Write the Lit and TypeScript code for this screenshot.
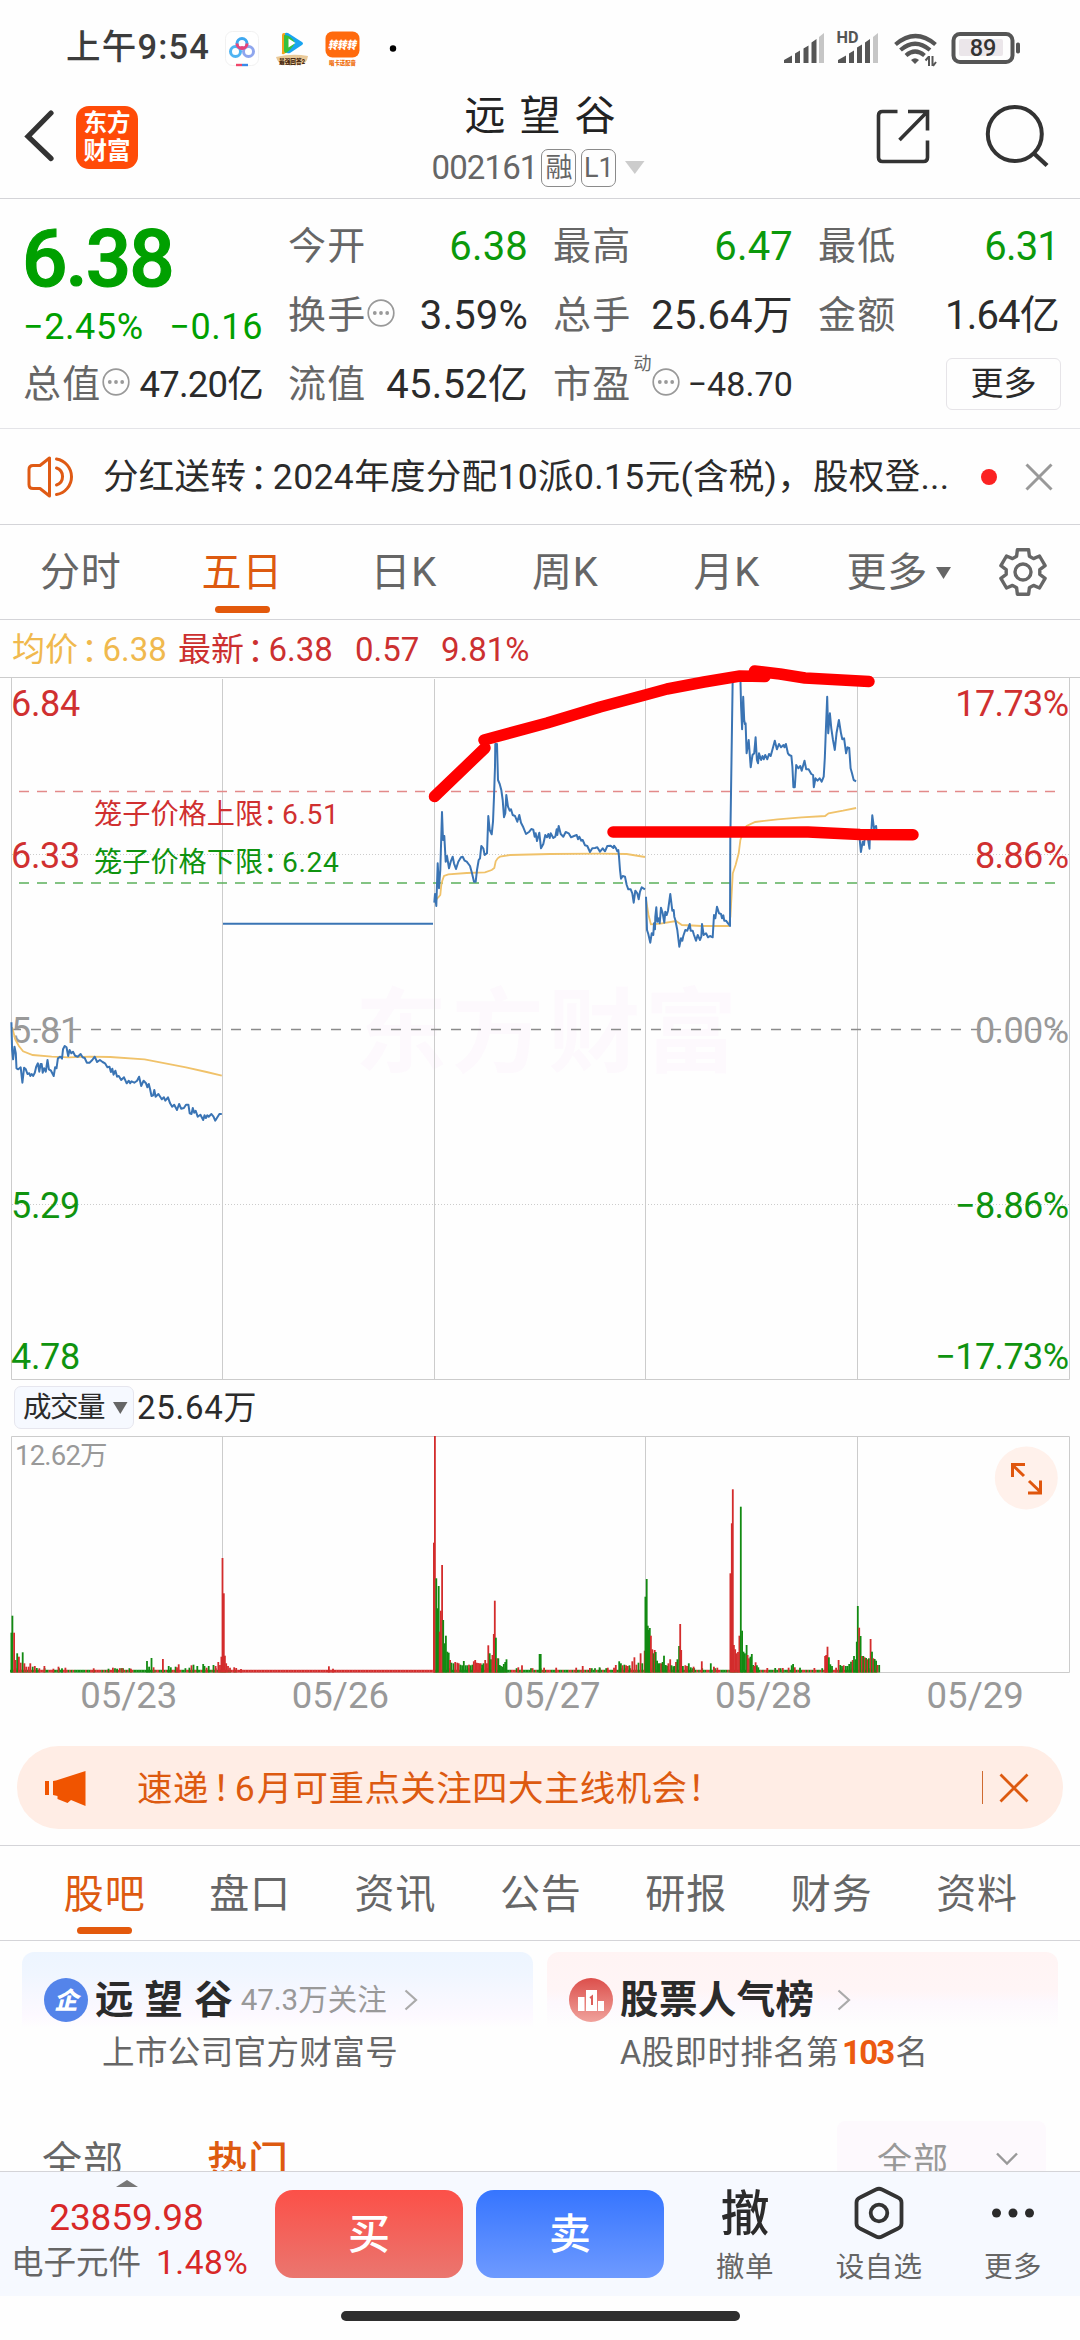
import { LitElement, html, svg, css } from "lit";
import { customElement } from "lit/decorators.js";
import { classMap } from "lit/directives/class-map.js";

type Pt = [number, number];

/* Series are stored in plotting units; a Frame maps them to page pixels. */
interface Frame { x: number; y: number; sx: number; sy: number }
const F_LEFT: Frame = { x: 0, y: 940, sx: 1 / 2.904, sy: 1 / 3 };
const F_MID: Frame = { x: 400, y: 640, sx: 1 / 3, sy: 1 / 3 };
const F_RIGHT: Frame = { x: 540, y: 520, sx: 1 / 2.904, sy: 1 / 3 };

const parse = (s: string): Pt[] =>
  s.trim().split(/\s+/).map((p) => p.split(",").map(Number) as Pt);
const place = (s: string, f: Frame): string =>
  parse(s).map(([x, y]) => `${(f.x + x * f.sx).toFixed(1)},${(f.y + y * f.sy).toFixed(1)}`).join(" ");

const PRICE: string[] = [
  place(`33,247 35,330 38,358 42,320 46,340 48,385 53,388 60,382 65,428 70,383 75,388 80,402 85,400 88,408 92,402 96,408
  101,398 105,380 110,370 114,395 118,372 121,372 124,398 128,385 133,395 138,360 142,388 148,392 156,408 160,382 164,385
  168,355 175,350 180,356 183,328 188,318 193,322 198,348 202,330 207,340 212,335 218,347 226,350 234,342 240,352 246,354
  252,368 260,368 268,360 275,350 282,366 290,360 298,366 305,370 312,382 318,380 322,396 326,386 330,404 335,392 340,410
  345,408 352,420 360,412 368,430 374,422 378,430 382,424 390,428 398,422 404,410 410,438 417,422 424,430 428,442 432,432
  436,448 440,468 445,466 448,450 452,470 460,462 470,478 476,472 480,482 488,472 494,490 500,500 506,494 514,510 520,492
  526,506 534,504 540,494 547,494 551,520 556,522 560,504 564,518 568,512 574,530 582,524 590,540 594,526 598,534 602,526
  606,530 614,522 620,530 625,542 630,534 637,522 644,522`, F_LEFT),
  "223,923.7 433,923.7",
  place(`103,788 105,762 109,798 113,670 117,745 121,690 126,516 129,600 133,588 137,665 141,648 147,685 152,665 158,650
  162,670 168,687 175,665 183,652 188,650 194,662 200,665 210,678 216,700 222,725 227,725 231,690 236,660 240,655 244,618
  250,625 254,645 261,640 265,528 269,570 275,583 279,545 282,470 285,380 286,312 291,312 294,420 299,432 304,450 308,480
  312,532 316,520 319,465 324,500 329,512 333,508 338,525 345,528 352,545 358,525 363,548 370,562 378,582 388,575 394,567
  400,569 404,590 407,580 411,603 418,578 423,625 430,612 436,585 441,592 445,582 449,594 452,580 460,594 466,590 470,568
  472,585 476,558 482,582 490,590 497,576 506,580 513,592 522,588 530,585 534,598 538,590 544,602 548,600 555,616 562,618
  570,636 577,625 585,624 592,622 600,635 608,625 615,634 622,618 632,617 640,624 642,617 648,625 652,634 655,630 657,650
  660,690 663,716 668,708 675,710 680,735 685,748 692,748 697,760 701,788 706,752 712,760 716,778 720,755 725,742 735,748`, F_MID),
  place(`738,770 741,870 745,882 751,908 755,880 760,885 762,850 765,868 766,830 769,802 772,845 776,835 779,850 783,803
  788,820 793,848 796,815 800,825 804,812 811,762 817,812 821,810 823,830 826,840 832,870 838,920 843,895 847,902 850,888
  856,870 862,872 869,852 872,872 878,872 882,885 888,902 893,885 900,900 904,890 906,852 911,885 918,880 924,892 930,888
  938,892 942,825 946,835 951,800 957,820 963,822 966,835 970,826 973,842 978,842 984,850 990,858 991,600 994,400 998,115`, F_MID),
  place(`560,474 582,474 584,560 587,628 590,530 593,600 595,612 597,610 600,700 606,660 612,742 617,705 622,700 626,652
  630,720 633,730 636,700 642,720 646,708 650,718 654,705 660,718 665,702 670,708 676,685 682,662 688,688 694,672 700,682
  707,675 710,682 714,672 720,700 724,705 730,708 733,740 736,802 740,802 744,735 750,745 756,738 760,752 768,722 773,748
  780,748 788,762 793,765 795,802 800,775 806,782 812,775 818,785 824,770 827,715 830,635 834,530 837,640 842,580 846,625
  851,660 856,690 861,640 868,600 874,640 878,658 883,655 889,700 893,682 898,684 902,745 906,760 911,780 918,784`, F_RIGHT),
  place(`921,940 928,955 932,996 937,965 941,975 945,935 950,940 957,986 958,945 962,935 965,886 970,925 976,918 978,940`, F_RIGHT),
];

const AVERAGE: string[] = [
  place(`35,262 45,300 55,318 67,334 95,345 150,350 200,352 260,350 320,351 420,358 480,370 540,382 600,396 644,407`, F_LEFT),
  place(`110,778 115,772 121,765 124,735 127,722 132,708 145,703 200,699 255,697 275,690 283,684 287,664 293,655 300,650 330,645
  450,642 600,641 680,642 735,651`, F_MID),
  place(`308,1140 315,1185 322,1213 350,1211 395,1203 412,1215 470,1218 548,1218 553,1190 560,1060 568,1035 577,1000 582,960
  590,935 600,918 625,906 690,898 760,892 828,888 838,880 880,872 918,864`, F_RIGHT),
];

const STROKES: string[] = [
  "434.5,796.5 485,748",
  "484,740 547,723 600,707 645,695 667,689 704,682 740,676 765,676.5",
  "754.5,671 780,674 805,678 869,681.5",
  "613,832 808,832 860,834.5 913,834.7",
];

/* Volume bars: x, top and direction (r = up, g = down). */
const VOL_LEFT = `33,788,g 36,737,g 41,788,r 45,870,r 50,850,g 55,860,r 60,878,r 66,847,g 71,880,r 76,890,r 83,890,r 88,880,r
95,890,g 101,888,r 107,894,g 114,895,r 129,888,r 155,896,r 170,890,r 180,895,g 190,893,r 272,895,r 315,896,g 328,893,r 340,896,g
355,895,r 380,896,r 427,873,g 433,890,g 440,864,g 446,892,r 473,867,r 490,888,g 496,892,g 510,890,g 514,892,r 519,883,r 550,893,g
556,886,r 562,884,g 573,888,g 590,882,g 594,888,g 600,893,r 606,888,g 620,885,g 626,888,r 634,876,r 639,885,r 643,860,r 646,564,r
650,670,r 653,857,r 657,880,r 662,888,r 668,893,r 680,892,r 686,894,r 700,897,r 955,889,r 967,896,r 1260,518,r 1263,198,r
1267,625,g 1270,715,g 1274,648,g 1277,785,r 1280,722,r 1284,585,r 1287,750,g 1291,820,g 1295,797,g 1299,845,g 1303,848,g
1307,870,r 1311,878,g 1317,880,g 1322,876,r 1328,878,r 1332,880,r 1337,884,g 1342,886,g 1347,873,g 1352,886,g 1357,886,g
1362,884,r 1367,886,g 1372,884,g 1376,874,r 1380,870,r 1384,878,r 1388,879,r 1392,880,r 1396,880,r 1400,884,g 1404,880,g
1409,870,r 1414,880,r 1418,826,r 1422,850,g 1426,868,g 1430,855,r 1434,792,r 1437,692,r 1440,803,g 1443,865,r 1447,865,g
1451,885,g 1455,888,g 1459,890,g 1463,882,g 1467,876,g 1471,868,g 1505,892,r 1516,886,r 1567,852,g`;
const VOL_RIGHT = `2,852,g 12,893,r 47,893,r 105,893,r 124,888,r 145,894,r 173,892,g 197,893,r 215,893,r 220,885,r 230,874,g 235,880,g
240,886,r 245,884,g 250,886,r 255,888,r 260,886,g 268,874,r 274,862,r 280,884,r 286,878,g 292,850,r 297,880,g 304,842,r 306,680,g
310,627,g 313,767,g 316,780,g 319,774,g 322,797,r 326,838,r 330,850,g 333,840,r 336,846,g 340,872,g 344,880,g 348,880,g 352,880,r
356,876,g 360,857,g 365,885,g 369,887,g 373,880,r 378,868,r 382,886,g 387,889,g 391,888,g 395,876,r 399,868,g 404,828,g 407,762,r
410,840,r 415,888,g 422,886,r 427,888,r 432,880,g 438,892,g 446,890,r 470,874,r 496,880,g 505,890,r 515,893,r 553,610,r 557,460,r
560,358,r 563,825,r 567,838,r 571,850,r 575,846,r 579,797,r 583,410,g 587,782,g 591,845,g 595,850,g 600,825,g 603,855,r 607,865,r
611,860,g 615,852,g 619,885,g 622,888,r 626,877,r 630,886,g 634,892,g 660,894,r 683,894,g 705,894,r 722,893,r 731,886,g 735,882,g
740,892,r 755,893,g 797,894,r 828,858,r 831,855,r 835,830,r 839,862,g 843,883,g 848,888,g 860,893,r 867,870,r 872,885,g 877,888,g
882,886,r 888,888,g 893,888,g 898,882,g 903,875,g 908,870,r 912,858,g 917,868,g 920,815,g 923,708,g 927,773,r 931,798,g 935,858,r
939,858,g 943,862,r 947,864,g 951,868,r 955,865,g 960,807,r 964,845,g 968,865,r 972,867,g 976,872,g 980,885,r 985,885,g`;

const VOL_BASE = 1672;
interface Bar { x: number; y: number; up: boolean }
const bars = (s: string, ox: number): Bar[] =>
  s.trim().split(/\s+/).map((t) => {
    const [x, y, d] = t.split(",");
    return { x: ox + +x / 2.904, y: 1370 + +y / 3, up: d === "r" };
  });
const VOLUME: Bar[] = [...bars(VOL_LEFT, 0), ...bars(VOL_RIGHT, 540)];

/* Low traded minutes between the peaks, at a steady small height. */
const QUIET: Bar[] = [];
for (let x = 11, n = 7; x < 878; x += 1.6) {
  n = (n * 1103 + 377) % 8191;
  const flat = x > 236 && x < 432;
  QUIET.push({ x, y: flat ? 1669.8 : 1669.8 - ((n % 9) === 0 ? 1.6 : 0), up: flat || n % 5 < 2 });
}

const infoIcon = html`<svg class="info" viewBox="0 0 28 28" width="28" height="28">
  <circle cx="14" cy="14" r="12.8" fill="none" stroke="#999" stroke-width="1.7" />
  <circle cx="7.8" cy="14" r="1.9" fill="#999" /><circle cx="14" cy="14" r="1.9" fill="#999" /><circle cx="20.2" cy="14" r="1.9" fill="#999" />
</svg>`;

const base = css`
  :host { display: block; box-sizing: border-box; }
  *, *::before, *::after { box-sizing: border-box; }
  svg { display: block; flex: none; }
  .colon { font-feature-settings: "halt"; padding: 0 .14em 0 .1em; }
`;

@customElement("status-bar")
class StatusBar extends LitElement {
  static styles = [base, css`
    :host { height: 94px; display: flex; justify-content: space-between; align-items: flex-start; padding: 0 58px 0 66px; }
    .left, .right { display: flex; align-items: center; height: 94px; }
    .time { font-size: 34.500px; font-weight: 500; color: #3c3c3c; line-height: 40px; letter-spacing: 1.200px; width: 159px; white-space: nowrap; }
    .apps { gap: 16px; display: flex; padding-top: 3px; }
  `];
  render() {
    return html`
      <div class="left">
        <div class="time">上午9:54</div>
        <div class="apps">
          <svg width="34" height="36" viewBox="0 0 34 36">
            <rect x=".5" y=".5" width="33" height="34" rx="7" fill="#fff" stroke="#f1f1f1" />
            <circle cx="17" cy="12.500" r="5" fill="none" stroke="#3ea8f0" stroke-width="3" />
            <circle cx="10.500" cy="20.500" r="5" fill="none" stroke="#4fb4f2" stroke-width="3" />
            <circle cx="23.500" cy="20.500" r="5" fill="none" stroke="#8fa6ee" stroke-width="3" />
            <path d="M12 12.500a5 5 0 0 0 10 0M14.500 18q2.500-3 5 0" fill="none" stroke="#e8447a" stroke-width="3" />
            <path d="M11 34h6" stroke="#f0476b" stroke-width="2.400" /><path d="M17 34h6" stroke="#3b8ae8" stroke-width="2.400" />
          </svg>
          <svg width="34" height="36" viewBox="0 0 34 36">
            <path d="M7 4v17q-1 3 2 2l5-3V3L9 2q-2 0-2 2z" fill="#f5a21b" />
            <path d="M10 3q0-2 3-1l14 9q2 1.500 0 3l-12 8q-3 1-4-1z" fill="#18a4f0" />
            <path d="M9 4q7 0 11 8-4 7-9 10-2 0-2-3z" fill="#35c03c" />
            <path d="M13.500 7.500v9l7-4.500z" fill="#fff" />
            <path d="M1 26q16-4 32-1-1 8-8 9H9q-6-1-8-8z" fill="#e9c998" />
            <text x="4" y="32.500" font-size="6.500" font-weight="900" fill="#4a2a12" textLength="26" lengthAdjust="spacingAndGlyphs">最强回答2</text>
          </svg>
          <svg width="35" height="36" viewBox="0 0 35 36">
            <rect x=".5" y=".5" width="34" height="26" rx="7" fill="#ff6a0d" />
            <text x="3" y="18" font-size="11" font-weight="900" font-style="italic" fill="#fff" textLength="28" lengthAdjust="spacingAndGlyphs">转转转</text>
            <text x="4" y="33.500" font-size="6" font-weight="900" fill="#f0700f" textLength="27" lengthAdjust="spacingAndGlyphs">唱卡送配音</text>
          </svg>
          <svg width="60" height="36" viewBox="0 0 60 36"><circle cx="17" cy="17.500" r="3.200" fill="#000" /></svg>
        </div>
      </div>
      <div class="right">
        <svg width="240" height="40" viewBox="782 27 240 40">
          <g fill="#555">
            <path d="M784 63v-3l8-4.500v7.500zM795 63v-9.500l5-3v12.500zM803.500 63v-14.500l5-3v17.500zM811.500 63v-20.500l5-3.500v24z" />
            <path d="M838 63v-3l8-4.500v7.500zM849 63v-9.500l5-3v12.500zM857 63v-15.500l5-3v18.500zM865 63v-20.500l5-3.500v24z" />
          </g>
          <path d="M819 63v-26l5-4v30zM873 63v-26l5-4v30z" fill="#c6c6c6" />
          <text x="836.500" y="43" font-size="16" font-weight="700" fill="#555" textLength="22" lengthAdjust="spacingAndGlyphs">HD</text>
          <g fill="none" stroke="#555" stroke-width="4.200">
            <path d="M895.500 44.500q20-17 40 0" /><path d="M900.500 50q14.500-12.500 29.500 0" /><path d="M906 55.500q9-8 18.500 0" />
          </g>
          <path d="M911 60q4-3.500 8 0l-4 4z" fill="#555" />
          <path d="M929 56v10M928.500 57l-3 3.500M932.500 66v-10M933 66l3-4" stroke="#555" stroke-width="2" fill="none" />
          <rect x="953.500" y="34" width="59" height="28" rx="6.500" fill="none" stroke="#555" stroke-width="4" />
          <rect x="959" y="39" width="44" height="17" rx="2" fill="#ebe6ea" />
          <rect x="1016" y="42.500" width="4" height="11" rx="1.800" fill="#555" />
          <text x="983" y="56" font-size="23.500" font-weight="500" fill="#333" text-anchor="middle">89</text>
        </svg>
      </div>`;
  }
}

@customElement("stock-header")
class StockHeader extends LitElement {
  static styles = [base, css`
    :host { height: 105px; border-bottom: 1px solid #d4d4d8; display: grid; grid-template-columns: 400px 1fr 400px; }
    .left { display: flex; align-items: flex-start; padding: 12px 0 0 24px; gap: 22px; }
    .back { margin-top: 3px; }
    .logo { width: 62px; height: 63px; border-radius: 13px; background: #ff4b08; color: #fff; font-size: 23.500px; font-weight: 700; line-height: 28px; text-align: center; padding: 3px 0; }
    .mid { display: flex; flex-direction: column; align-items: center; }
    .title { font-size: 41px; line-height: 44px; color: #222; word-spacing: 3.800px; white-space: nowrap; }
    .sub { display: flex; align-items: center; height: 40px; margin-top: 10px; padding-left: 3px; }
    .code { font-size: 33px; color: #666; letter-spacing: -.9px; line-height: 40px; margin-right: 4px; }
    .badge { border: 1.500px solid #8a8a8a; border-radius: 7px; height: 38px; width: 35px; font-size: 27px; line-height: 36px; text-align: center; color: #666; margin-right: 5px; }
    .right { display: flex; justify-content: flex-end; align-items: flex-start; padding: 12.500px 31px 0 0; gap: 51px; }
    .search { margin-top: -4px; }
  `];
  render() {
    return html`
      <div class="left">
        <svg class="back" width="30" height="54" viewBox="0 0 30 54"><path d="M27 4L4 27.500l23 22" fill="none" stroke="#333" stroke-width="5.200" stroke-linecap="round" /></svg>
        <div class="logo">东方<br />财富</div>
      </div>
      <div class="mid">
        <div class="title">远 望 谷</div>
        <div class="sub"><span class="code">002161</span><span class="badge">融</span><span class="badge">L1</span>
          <svg width="30" height="14" viewBox="-4 0 30 14"><path d="M0 0h19.500l-9.700 13z" fill="#ccc" /></svg></div>
      </div>
      <div class="right">
        <svg width="54" height="58" viewBox="875 107 54 58"><g fill="none" stroke="#333" stroke-width="3.600">
          <path d="M896.500 111.500h-15q-4 0-4 4v42q0 4 4 4h41q4 0 4-4v-17" /><path d="M907 111.500h19.500v19M926 112l-27.500 28" /></g></svg>
        <svg class="search" width="68" height="66" viewBox="981 103 68 66"><g fill="none" stroke="#333" stroke-width="4">
          <circle cx="1014.800" cy="134" r="27" /><path d="M1034 153.500l13 12" stroke-width="4.400" /></g></svg>
      </div>`;
  }
}

@customElement("quote-panel")
class QuotePanel extends LitElement {
  static styles = [base, css`
    :host { height: 230px; border-bottom: 1px solid #e4e4e8; padding: 12.500px 19px 0 23px; }
    .grid { display: grid; grid-template-columns: 240px 240px 240px 241px; column-gap: 25px; grid-template-rows: repeat(3, 69px); }
    .main { grid-row: span 2; color: #00a000; }
    .price { font-size: 80px; font-weight: 500; -webkit-text-stroke: 1.200px #00a000; line-height: 80px; padding-top: 7px; letter-spacing: -2px; margin-left: -1px; }
    .delta { display: flex; justify-content: space-between; font-size: 36px; line-height: 40px; padding-top: 8px; letter-spacing: .6px; }
    .cell { display: flex; justify-content: space-between; align-items: center; color: #666; font-size: 38px; line-height: 69px; white-space: nowrap; }
    .label { display: flex; align-items: center; letter-spacing: 1.200px; }
    .info { margin: -5px 0 0 1px; }
    sup { font-size: 18px; line-height: 20px; margin: -40px 0 0 2px; letter-spacing: 0; }
    .value { color: #2b2b2b; font-size: 40px; letter-spacing: .2px; }
    .green { color: #0b990b; }
    .n { letter-spacing: -.8px; }
    .m { font-size: 36.500px; letter-spacing: -.8px; }
    .s { font-size: 34px; letter-spacing: .1px; }
    .more { width: 115px; height: 52px; border: 1.500px solid #e6e4e8; border-radius: 6px; font-size: 33px; line-height: 49px; text-align: center; color: #2b2b2b; margin: 0 -2px 0 auto; }
  `];
  private cell(label: unknown, value: string, cls: Record<string, boolean> = {}) {
    return html`<div class="cell"><span class="label">${label}</span><span class=${classMap({ value: true, ...cls })}>${value}</span></div>`;
  }
  render() {
    return html`<div class="grid">
      <div class="main"><div class="price">6.38</div><div class="delta"><span>−2.45%</span><span>−0.16</span></div></div>
      ${this.cell("今开", "6.38", { green: true })}
      ${this.cell("最高", "6.47", { green: true })}
      ${this.cell("最低", "6.31", { green: true, n: true })}
      ${this.cell(html`换手${infoIcon}`, "3.59%")}
      ${this.cell("总手", "25.64万")}
      ${this.cell("金额", "1.64亿", { n: true })}
      ${this.cell(html`总值${infoIcon}`, "47.20亿", { m: true })}
      ${this.cell("流值", "45.52亿")}
      ${this.cell(html`市盈<sup>动</sup>${infoIcon}`, "−48.70", { s: true })}
      <div class="cell"><div class="more">更多</div></div>
    </div>`;
  }
}

@customElement("notice-row")
class NoticeRow extends LitElement {
  static styles = [base, css`
    :host { height: 96px; border-bottom: 1px solid #d4d4d8; display: flex; align-items: center; padding: 0 27px; }
    .text { font-size: 35.500px; color: #2b2b2b; margin-left: 28px; width: 878px; flex: none; white-space: nowrap; letter-spacing: .3px; line-height: 50px; }
    .n { letter-spacing: .4px; }
    .dot { width: 16px; height: 16px; border-radius: 50%; background: #fb2222; margin-right: 28px; flex: none; }
  `];
  render() {
    return html`
      <svg width="48" height="44" viewBox="0 0 48 44"><g fill="none" stroke="#df5a14" stroke-width="3" stroke-linejoin="round" stroke-linecap="round">
        <path d="M22.500 3v38L13 33.500H6q-4 0-4-4v-15q0-4 4-4h7z" /><path d="M29.500 4a18 18 0 0 1 0 35.500M29.500 13a9 9 0 0 1 0 17" /></g></svg>
      <div class="text">分红送转<span class="colon">：</span><span class="n">2024</span>年度分配<span class="n">10</span>派<span class="n">0.15</span>元(含税)，股权登...</div>
      <span class="dot"></span>
      <svg width="28" height="28" viewBox="0 0 28 28"><path d="M1.500 1.500l25 25M26.500 1.500l-25 25" stroke="#999" stroke-width="3" /></svg>`;
  }
}

@customElement("period-tabs")
class PeriodTabs extends LitElement {
  static styles = [base, css`
    :host { height: 95px; border-bottom: 1px solid #d4d4d8; display: grid; grid-template-columns: repeat(5, 161.500px) 1fr 115px; color: #666; font-size: 40px; }
    .tab { display: flex; flex-direction: column; align-items: center; padding-top: 22px; line-height: 52px; letter-spacing: .8px; white-space: nowrap; }
    .active { color: #dd5a10; }
    .bar { width: 55px; height: 6.500px; border-radius: 4px; background: #e3590c; margin-top: 7px; }
    .row { display: flex; align-items: center; gap: 8px; padding-left: 25px; }
    .gear { display: flex; align-items: center; justify-content: center; padding-left: 1px; }
  `];
  render() {
    const teeth = Array.from({ length: 6 }, (_, i) => i * 60);
    const pts: string[] = [];
    for (const t of teeth) {
      for (const [r, a] of [[17, -22], [23, -14], [23, 14], [17, 22]]) {
        const k = ((t + a - 90) * Math.PI) / 180;
        pts.push(`${(25 + r * Math.cos(k)).toFixed(1)},${(25 + r * Math.sin(k)).toFixed(1)}`);
      }
    }
    return html`
      <div class="tab">分时</div>
      <div class="tab active">五日<span class="bar"></span></div>
      <div class="tab">日K</div><div class="tab">周K</div><div class="tab">月K</div>
      <div class="tab"><div class="row">更多<svg width="15" height="12" viewBox="0 0 15 12"><path d="M0 0h15l-7.500 12z" fill="#666" /></svg></div></div>
      <div class="gear"><svg width="50" height="50" viewBox="0 0 50 50"><g fill="none" stroke="#666" stroke-width="3.400" stroke-linejoin="round">
        <polygon points=${pts.join(" ")} /><circle cx="25" cy="25" r="8" /></g></svg></div>`;
  }
}

@customElement("price-chart")
class PriceChart extends LitElement {
  static styles = [base, css`
    .legend { height: 57px; display: flex; align-items: center; padding: 3px 0 0 12px; font-size: 33px; line-height: 50px; color: #cc3030; white-space: nowrap; }
    .avg { color: #f0b94e; width: 166px; }
    .last { width: 177px; }
    .chg { width: 86px; }
    svg.plot { overflow: visible; position: relative; z-index: 1; }
    .axis { font-size: 36px; letter-spacing: -.3px; }
    .cage { font-size: 28.200px; }
    .num { letter-spacing: .6px; }
    .mark { font-size: 92px; font-weight: 700; fill: #fdf9fd; }
    .up { fill: #d03030; } .down { fill: #0f930f; } .flat { fill: #999; }
    .end { text-anchor: end; letter-spacing: -.6px; }
  `];
  render() {
    const axis: [string, string, number, string][] = [
      ["6.84", "17.73%", 716, "up"], ["6.33", "8.86%", 868, "up"], ["5.81", "0.00%", 1043, "flat"],
      ["5.29", "−8.86%", 1217.5, "down"], ["4.78", "−17.73%", 1369, "down"],
    ];
    return html`
      <div class="legend">
        <span class="avg">均价<span class="colon">：</span>6.38</span><span class="last">最新<span class="colon">：</span>6.38</span>
        <span class="chg">0.57</span><span>9.81%</span>
      </div>
      <svg class="plot" width="1080" height="703" viewBox="0 677 1080 703">
        <text class="mark" x="355" y="1065" textLength="382">东方财富</text>
        <g stroke="#ccc" fill="none">
          <path d="M0 677.500h1080" /><path d="M11.500 677v702.500h1058V677M222.500 679v700M434.500 679v700M645.500 679v700M857.500 679v700" />
          <path d="M12 854.500h1057M12 1204.500h1057" stroke-dasharray="1 2" />
        </g>
        <path d="M19 791.500h1037" stroke="#e38a8a" stroke-width="1.500" stroke-dasharray="10 8" />
        <path d="M19 883h1037" stroke="#5bb05b" stroke-width="1.500" stroke-dasharray="10 8" />
        <path d="M11 1029.500h1048" stroke="#8a8a8a" stroke-width="1.700" stroke-dasharray="10 10" />
        ${axis.map(([l, r, y, c]) => svg`
          <text class="axis ${c}" x="11" y=${y}>${l}</text><text class="axis end ${c}" x="1068.500" y=${y}>${r}</text>`)}
        <text class="cage up" x="94" y="824">笼子价格上限<tspan class="colon" style="font-feature-settings:'halt'">：</tspan></text><text class="cage num up" x="282" y="824">6.51</text>
        <text class="cage down" x="94" y="872">笼子价格下限<tspan class="colon" style="font-feature-settings:'halt'">：</tspan></text><text class="cage num down" x="282" y="872">6.24</text>
        ${AVERAGE.map((p) => svg`<polyline points=${p} fill="none" stroke="#f0c26a" stroke-width="1.800" />`)}
        ${PRICE.map((p) => svg`<polyline points=${p} fill="none" stroke="#3a74b4" stroke-width="2" stroke-linejoin="round" />`)}
        ${STROKES.map((p) => svg`<polyline points=${p} fill="none" stroke="#ff0000" stroke-width="11.500" stroke-linejoin="round" stroke-linecap="round" />`)}
      </svg>`;
  }
}

@customElement("volume-chart")
class VolumeChart extends LitElement {
  static styles = [base, css`
    .head { height: 56px; display: flex; align-items: center; padding: 0 0 1px 14px; }
    .pick { width: 120px; height: 43px; border: 1.500px solid #e6e6ee; border-radius: 7px; background: #f6f9ff; display: flex; align-items: center; gap: 9px; padding-left: 8px; font-size: 28.500px; letter-spacing: -1.500px; color: #2b2b2b; line-height: 40px; margin-right: 3px; }
    .total { font-size: 33px; color: #2b2b2b; line-height: 40px; letter-spacing: .7px; }
    .cap { font-size: 27.500px; fill: #999; letter-spacing: -.8px; }
    .dates { display: grid; grid-template-columns: repeat(5, 211.600px); padding-left: 23px; height: 73px; font-size: 36.500px; color: #999; line-height: 46px; text-align: center; }
  `];
  render() {
    const bar = (b: Bar) => svg`<rect x=${(b.x - 0.9).toFixed(1)} y=${b.y.toFixed(1)} width="1.800" height=${(VOL_BASE - b.y + 0.5).toFixed(1)} fill=${b.up ? "#d32c2c" : "#128a12"} />`;
    return html`
      <div class="head"><div class="pick">成交量<svg width="15" height="12" viewBox="0 0 15 12"><path d="M0 0h14.500l-7.200 12z" fill="#666" /></svg></div><span class="total">25.64万</span></div>
      <svg width="1080" height="237" viewBox="0 1436 1080 237">
        <path d="M11.500 1436.500h1058v236h-1058zM222.500 1436v236M434.500 1436v236M645.500 1436v236M857.500 1436v236" fill="none" stroke="#ccc" />
        <text class="cap" x="15" y="1465">12.62万</text>
        ${QUIET.map(bar)}${VOLUME.map(bar)}
        <circle cx="1026.300" cy="1478" r="31.500" fill="#fff1eb" />
        <g fill="none" stroke="#e0560d" stroke-width="3"><path d="M1012.500 1477v-12.500h12.500M1012.500 1465l11.500 11" /><path d="M1040.500 1480.500v12.500h-12.500M1040.500 1492l-11.500-11" /></g>
      </svg>
      <div class="dates">${["05/23", "05/26", "05/27", "05/28", "05/29"].map((d) => html`<span>${d}</span>`)}</div>`;
  }
}

@customElement("promo-banner")
class PromoBanner extends LitElement {
  static styles = [base, css`
    :host { height: 83px; margin: 0 17px 16px; border-radius: 42px; background: #ffede5; display: flex; align-items: center; padding: 0 34px 0 27px; color: #dd5a10; }
    .text { flex: 1; font-size: 35.500px; letter-spacing: .4px; line-height: 50px; padding: 3px 0 0 51px; }
    .bang { font-feature-settings: "halt"; padding: 0 .12em 0 .1em; }
    .six { letter-spacing: 2px; }
    .rule { width: 1.500px; height: 33px; background: #cf6a30; margin-right: 16px; }
  `];
  render() {
    return html`
      <svg width="42" height="38" viewBox="0 0 42 38"><path d="M1 12h4v14H1zM9 12l3-.5L41.500 2v35L27 31l-3.500 3-10-4v-3L9 26z" fill="#f05400" /></svg>
      <div class="text">速递<span class="bang">！</span><span class="six">6</span>月可重点关注四大主线机会！</div>
      <span class="rule"></span>
      <svg width="30" height="30" viewBox="0 0 30 30"><path d="M1.500 1.500l27 27M28.500 1.500l-27 27" stroke="#dd5a10" stroke-width="2.800" /></svg>`;
  }
}

@customElement("section-tabs")
class SectionTabs extends LitElement {
  static styles = [base, css`
    :host { height: 96px; border-top: 1px solid #d4d4d8; border-bottom: 1px solid #d4d4d8; display: grid; grid-template-columns: repeat(7, 145.400px); padding-left: 32px; font-size: 40px; color: #666; }
    .tab { display: flex; flex-direction: column; align-items: center; padding-top: 23px; line-height: 52px; letter-spacing: .9px; }
    .active { color: #dd5a10; }
    .bar { width: 55px; height: 6.500px; border-radius: 4px; background: #e3590c; margin-top: 6px; }
  `];
  render() {
    return html`${["股吧", "盘口", "资讯", "公告", "研报", "财务", "资料"].map((t, i) =>
      html`<div class=${classMap({ tab: true, active: i === 0 })}>${t}${i === 0 ? html`<span class="bar"></span>` : ""}</div>`)}`;
  }
}

@customElement("community-panel")
class CommunityPanel extends LitElement {
  static styles = [base, css`
    :host { height: 230px; overflow: hidden; }
    .cards { display: grid; grid-template-columns: 511px 511px; gap: 14px; padding: 11px 22px 0; }
    .card { height: 130px; border-radius: 12px; }
    .blue { background: linear-gradient(#edf5ff 0, #f0f6ff 22px, #fdf9ff 64px, #fefefe 76px); }
    .pink { background: linear-gradient(#fff4f4 0, #fff5f6 38px, #fdf8fd 50px, #fefefe 76px); }
    .top { display: flex; align-items: center; padding: 26px 0 0 22px; height: 70px; white-space: nowrap; line-height: 44px; }
    .name { font-size: 38.500px; font-weight: 700; color: #2b2b2b; margin-left: 7px; letter-spacing: .4px; }
    .spaced { word-spacing: 1.500px; margin-right: 8px; letter-spacing: 0; }
    .fans { font-size: 29.500px; color: #999; margin-right: 17px; }
    .gap { width: 22px; }
    .sub { font-size: 32.500px; line-height: 40px; color: #666; padding: 11px 0 0 80px; letter-spacing: .4px; }
    .pink .sub { padding-left: 73px; }
    .sub b { color: #ec5a10; font-size: 33px; letter-spacing: -1.800px; margin: 0 2px 0 3px; }
    .filters { display: flex; align-items: flex-start; padding: 39px 34px 0 42px; font-size: 40px; line-height: 52px; color: #666; letter-spacing: 1px; }
    .hot { color: #dd5a10; font-weight: 500; margin-left: 83px; }
    .select { margin: 0 0 0 auto; display: flex; width: 209px; height: 90px; padding: 15px 28px 0 40px; border-radius: 8px; background: #fdf9fd; font-size: 35px; color: #999; justify-content: space-between; }
    .filters > span { padding-top: 15px; }
    .select svg { margin-top: 16px; }
  `];
  render() {
    const arrow = html`<svg width="14" height="22" viewBox="0 0 14 22"><path d="M1.500 1.500l10.500 9.500-10.500 9.500" fill="none" stroke="#aaa" stroke-width="2.200" /></svg>`;
    return html`
      <div class="cards">
        <div class="card blue">
          <div class="top"><svg width="44" height="44" viewBox="0 0 44 44"><circle cx="22" cy="22" r="22" fill="#5484ea" /><text x="22" y="31" font-size="24" font-weight="900" font-style="italic" fill="#fff" text-anchor="middle">企</text></svg>
            <span class="name spaced">远 望 谷</span><span class="fans">47.3万关注</span>${arrow}</div>
          <div class="sub">上市公司官方财富号</div>
        </div>
        <div class="card pink">
          <div class="top"><svg width="44" height="44" viewBox="0 0 44 44"><defs><linearGradient id="g" x1="0" y1="0" x2="0" y2="1"><stop stop-color="#dc4f4b" /><stop offset="1" stop-color="#f0a29c" /></linearGradient></defs><circle cx="22" cy="22" r="22" fill="url(#g)" />
            <path d="M9 19h6.500v14H9zM17 12h11v21H17zM29 23h6v10h-6z" fill="#fff" /><path d="M21 20l2-1.500V27" fill="none" stroke="#dc5f59" stroke-width="2" /></svg>
            <span class="name">股票人气榜</span><span class="gap"></span>${arrow}</div>
          <div class="sub">A股即时排名第<b>103</b>名</div>
        </div>
      </div>
      <div class="filters"><span>全部</span><span class="hot">热门</span>
        <div class="select">全部<svg width="22" height="14" viewBox="0 0 22 14"><path d="M1 1.500l10 10 10-10" fill="none" stroke="#999" stroke-width="2.400" /></svg></div></div>`;
  }
}

@customElement("trade-bar")
class TradeBar extends LitElement {
  static styles = [base, css`
    :host { height: 125px; border-top: 1px solid #d4d4d8; background: #f6f9ff; display: flex; }
    .index { width: 275px; display: flex; flex-direction: column; align-items: center; padding: 8px 22px 0 0; white-space: nowrap; }
    .num { font-size: 37px; line-height: 46px; margin-top: 8px; color: #d82828; letter-spacing: -.1px; }
    .ind { font-size: 32.500px; line-height: 38px; color: #666; align-self: flex-start; padding-left: 11px; display: flex; gap: 15px; margin-top: 3px; }
    .ind b { font-weight: 400; color: #d82828; font-size: 33.500px; letter-spacing: .5px; }
    .btn { width: 188px; height: 88px; border-radius: 18px; margin: 18px 13px 0 0; color: #fff; font-size: 42px; font-weight: 500; line-height: 89px; text-align: center; }
    .buy { background: linear-gradient(#fc5048, #ea766f); }
    .sell { background: linear-gradient(#3675ff, #6e9aff); margin-right: 14px; }
    .act { width: 134px; display: flex; flex-direction: column; align-items: center; font-size: 28.500px; color: #666; line-height: 36px; letter-spacing: .4px; white-space: nowrap; }
    .icon { height: 78px; display: flex; align-items: center; padding-top: 3px; }
    .big { font-size: 49px; color: #2b2b2b; font-weight: 500; letter-spacing: 0; padding-top: 7px; }
  `];
  render() {
    return html`
      <div class="index">
        <svg width="22" height="7" viewBox="0 0 22 7"><path d="M0 7L11 0l11 7z" fill="#777" /></svg>
        <div class="num">23859.98</div><div class="ind">电子元件<b>1.48%</b></div>
      </div>
      <div class="btn buy">买</div><div class="btn sell">卖</div>
      <div class="act"><div class="icon big">撤</div>撤单</div>
      <div class="act"><div class="icon"><svg width="50" height="54" viewBox="0 0 50 54"><g fill="none" stroke="#333" stroke-width="3.800" stroke-linejoin="round">
        <path d="M22 3.500q3-1.500 6 0l16 8q3.500 1.500 3.500 5v21q0 3.500-3.500 5l-16 8q-3 1.500-6 0l-16-8q-3.500-1.500-3.500-5v-21q0-3.500 3.500-5z" /><circle cx="25" cy="27" r="8.300" /></g></svg></div>设自选</div>
      <div class="act"><div class="icon"><svg width="44" height="10" viewBox="0 0 44 10"><g fill="#2b2b2b"><circle cx="5.500" cy="5" r="4.500" /><circle cx="22" cy="5" r="4.500" /><circle cx="38.500" cy="5" r="4.500" /></g></svg></div>更多</div>`;
  }
}

@customElement("app-root")
class AppRoot extends LitElement {
  static styles = css`
    :host { display: flex; flex-direction: column; width: 1080px; height: 2340px; overflow: hidden; background: #fefefe; font-family: Roboto, "Noto Sans CJK SC", sans-serif; }
    :host > * { flex: none; }
    .home { box-sizing: border-box; height: 44px; display: flex; flex: none; justify-content: center; padding-top: 15px; }
    .home span { width: 399px; height: 10px; border-radius: 5px; background: #2e2e2e; }
    status-bar, stock-header, quote-panel, notice-row, period-tabs, price-chart, volume-chart, promo-banner, section-tabs, community-panel, trade-bar { flex: none; }
  `;
  render() {
    return html`
      <status-bar></status-bar>
      <stock-header></stock-header>
      <quote-panel></quote-panel>
      <notice-row></notice-row>
      <period-tabs></period-tabs>
      <price-chart></price-chart>
      <volume-chart></volume-chart>
      <promo-banner></promo-banner>
      <section-tabs></section-tabs>
      <community-panel></community-panel>
      <trade-bar></trade-bar>
      <div class="home"><span></span></div>`;
  }
}
